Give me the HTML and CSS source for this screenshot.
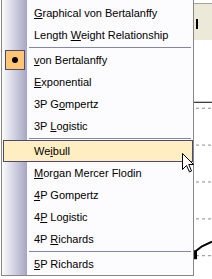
FILE: index.html
```html
<!DOCTYPE html>
<html lang="en">
<head>
    <meta charset="UTF-8">
    <title>Model Menu</title>
    <link rel="stylesheet" href="styles.css">
</head>
<body>
    <div class="screen">
        <div class="menu">
            <div class="item"><u>G</u>raphical von Bertalanffy</div>
            <div class="item">Length <u>W</u>eight Relationship</div>
            <div class="sep"></div>
            <div class="item checked"><span class="check"><span class="dot"></span></span><u>v</u>on Bertalanffy</div>
            <div class="item"><u>E</u>xponential</div>
            <div class="item">3P G<u>o</u>mpertz</div>
            <div class="item">3P <u>L</u>ogistic</div>
            <div class="sep"></div>
            <div class="item hover">We<u>i</u>bull</div>
            <div class="item"><u>M</u>organ Mercer Flodin</div>
            <div class="item"><u>4</u>P Gompertz</div>
            <div class="item">4<u>P</u> Logistic</div>
            <div class="item">4P <u>R</u>ichards</div>
            <div class="sep"></div>
            <div class="item"><u>5</u>P Richards</div>

            <svg class="pointer" width="13" height="20" viewBox="0 0 13 20">
                <path d="M0.5 0.5 L0.5 16.5 L4.5 12.5 L7.5 19 L9.5 18 L6.8 11.5 L11.5 11.5 Z" fill="#fff" stroke="#000" stroke-width="1"/>
            </svg>
        </div>

        <div class="behind">
            <div class="toolbar">
                <span class="caret"></span>
            </div>
            <svg class="chart" width="18" height="240" viewBox="0 0 18 240">
                <line x1="0" y1="62.5" x2="18" y2="62.5" stroke="#000" stroke-width="1"/>
                <g stroke="#8c8c8c" stroke-width="1" stroke-dasharray="3 3">
                    <line x1="2" y1="68.5" x2="18" y2="68.5"/>
                    <line x1="2" y1="105.5" x2="18" y2="105.5"/>
                    <line x1="2" y1="142.5" x2="18" y2="142.5"/>
                    <line x1="2" y1="179.5" x2="18" y2="179.5"/>
                    <line x1="2" y1="216.5" x2="18" y2="216.5"/>
                </g>
                <path d="M1.5 211 L1.5 220" stroke="#000" stroke-width="3"/>
                <path d="M1.5 212 L8 207 L18 202.5" stroke="#000" stroke-width="2" fill="none"/>
            </svg>
        </div>
    </div>
</body>
</html>
```

FILE: styles.css
```css
body {
    margin: 0;
    background: #fff;
    font-family: "Liberation Sans", Arial, sans-serif;
    font-size: 11px;
    color: #000;
}
.screen {
    display: flex;
    width: 212px;
    height: 279px;
    overflow: hidden;
}
.menu {
    position: relative;
    width: 191px;
    height: 273px;
    margin-left: 1px;
    padding-top: 2px;
    border-left: 1px solid #8c877c;
    border-right: 1px solid #8a8686;
    border-bottom: 1px solid #8a8686;
    background:
        linear-gradient(to right, #fbfbfd 0, #a6a6c4 25px, transparent 25px) no-repeat,
        #fcfbfe;
    background-size: 25px 100%, auto;
}
.item {
    position: relative;
    height: 22px;
    line-height: 22px;
    padding-left: 32px;
    white-space: nowrap;
}
.item u {
    text-decoration: underline;
    text-underline-offset: 1px;
}
.sep {
    height: 3px;
    margin-left: 27px;
    margin-right: 2px;
    background: linear-gradient(#8585a8, #8585a8) no-repeat 0 1px / 100% 1px;
}
.check {
    position: absolute;
    left: 3px;
    top: 1px;
    width: 18px;
    height: 18px;
    border: 1px solid #4b4b6f;
    background: #ffc573;
}
.dot {
    position: absolute;
    left: 6px;
    top: 6px;
    width: 6px;
    height: 6px;
    border-radius: 50%;
    background: #000;
}
.hover {
    height: 20px;
    line-height: 20px;
    margin-left: 1px;
    padding-left: 30px;
    border: 1px solid #4b4b6f;
    background: #ffeec2;
}
.pointer {
    position: absolute;
    left: 180px;
    top: 153px;
}
.behind {
    flex: 1;
    display: flex;
    flex-direction: column;
}
.toolbar {
    height: 36px;
    margin-top: 3px;
    border-top: 1px solid #a8a498;
    background: #ece9d8;
    position: relative;
}
.caret {
    position: absolute;
    left: 2px;
    top: 15px;
    width: 2px;
    height: 10px;
    background: #000;
}
.chart {
    display: block;
}
```
